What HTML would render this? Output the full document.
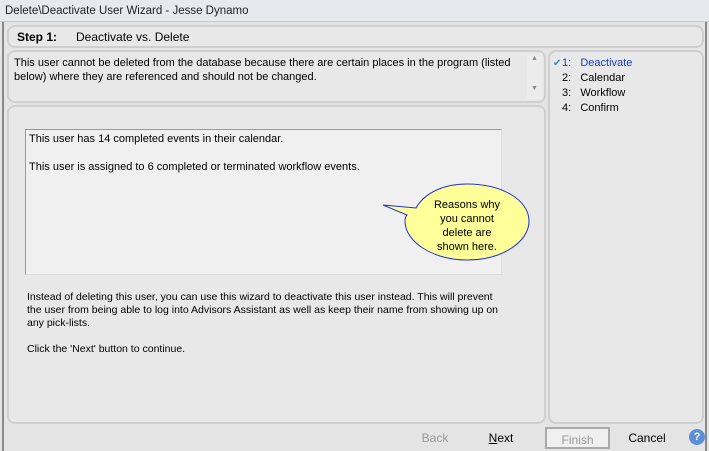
<!DOCTYPE html>
<html><head><style>
*{margin:0;padding:0;box-sizing:border-box}
body{width:709px;height:451px;background:#e4e4e4;font-family:"Liberation Sans",sans-serif;font-size:11px;color:#000;position:relative;overflow:hidden}
.a{position:absolute}
.p{position:absolute;border:2px solid #cfcfcf;border-radius:8px;background:#e8e8e8}
.btn{position:absolute;top:427px;height:22px;text-align:center;line-height:22px;font-size:12px;border:1px solid #b5b5b5;background:#f0f0f0}
</style></head><body>
<div class="a" style="left:0;top:0;width:709px;height:22px;background:#e6e9ee;border-bottom:1px solid #c8c8c8;font-size:11.5px;padding:5px 0 0 5px;color:#222">Delete\Deactivate User Wizard - Jesse Dynamo</div>
<div class="a" style="left:2px;top:22px;width:2px;height:429px;background:#8a8a8a"></div>
<div class="a" style="left:705px;top:22px;width:2px;height:429px;background:#8a8a8a"></div>
<div class="p" style="left:7px;top:25px;width:697px;height:23px;font-size:12px;padding:3px 0 0 8px"><b>Step 1:</b><span style="margin-left:19px">Deactivate vs. Delete</span></div>
<div class="p" style="left:7px;top:50px;width:539px;height:53px;padding:4px 0 0 5px;line-height:14px;font-size:11px">This user cannot be deleted from the database because there are certain places in the program (listed below) where they are referenced and should not be changed.
<div class="a" style="right:2px;top:2px;width:15px;height:45px;background:#ececec;color:#888;font-size:7px;text-align:center;line-height:10px">▲<br><br><br>▼</div></div>
<div class="p" style="left:7px;top:105px;width:539px;height:319px"></div>
<div class="a" style="left:25px;top:129px;width:477px;height:146px;border:1px solid #999;border-right-color:#ddd;border-bottom-color:#ddd;background:#f0f0f0;padding:2px 0 0 3px;line-height:14px">This user has 14 completed events in their calendar.<br><br>This user is assigned to 6 completed or terminated workflow events.</div>
<svg class="a" style="left:375px;top:180px" width="160" height="90"><path d="M8 25 L41 28 C50 12 70 4 92 4 C127 4 154 20 154 41 C154 62 127 80 92 80 C58 80 30 62 30 41 C30 38 31 36 32 35 Z" fill="#ffff99" stroke="#2233cc" stroke-width="1"/>
<text x="92" y="28" text-anchor="middle" font-family="Liberation Sans" font-size="11">Reasons why</text>
<text x="92" y="42" text-anchor="middle" font-family="Liberation Sans" font-size="11">you cannot</text>
<text x="92" y="56" text-anchor="middle" font-family="Liberation Sans" font-size="11">delete are</text>
<text x="92" y="70" text-anchor="middle" font-family="Liberation Sans" font-size="11">shown here.</text></svg>
<div class="a" style="left:27px;top:291px;width:480px;line-height:13px;font-size:10.5px">Instead of deleting this user, you can use this wizard to deactivate this user instead.  This will prevent the user from being able to log into Advisors Assistant as well as keep their name from showing up on any pick-lists.<br><br>Click the 'Next' button to continue.</div>
<div class="p" style="left:548px;top:50px;width:156px;height:374px;padding:4px 0 0 12px;line-height:15px;font-size:11px">
<span class="a" style="left:3px;top:4px;color:#3388cc;font-size:10px">✔</span>
<span style="color:#1a3fb5">1:&nbsp;&nbsp;&nbsp;Deactivate</span><br>2:&nbsp;&nbsp;&nbsp;Calendar<br>3:&nbsp;&nbsp;&nbsp;Workflow<br>4:&nbsp;&nbsp;&nbsp;Confirm</div>
<div class="btn" style="left:405px;width:60px;color:#999;border:none;background:none">Back</div>
<div class="btn" style="left:466px;width:70px;border:none;background:none"><u>N</u>ext</div>
<div class="btn" style="left:545px;width:65px;color:#999;border:2px solid #aaa">Finish</div>
<div class="btn" style="left:612px;width:70px;border:none;background:none">Cancel</div>
<div class="a" style="left:689px;top:429px;width:16px;height:16px;border-radius:50%;background:#5b8fd6;color:#fff;font-size:11px;font-weight:bold;text-align:center;line-height:16px">?</div>
</body></html>
